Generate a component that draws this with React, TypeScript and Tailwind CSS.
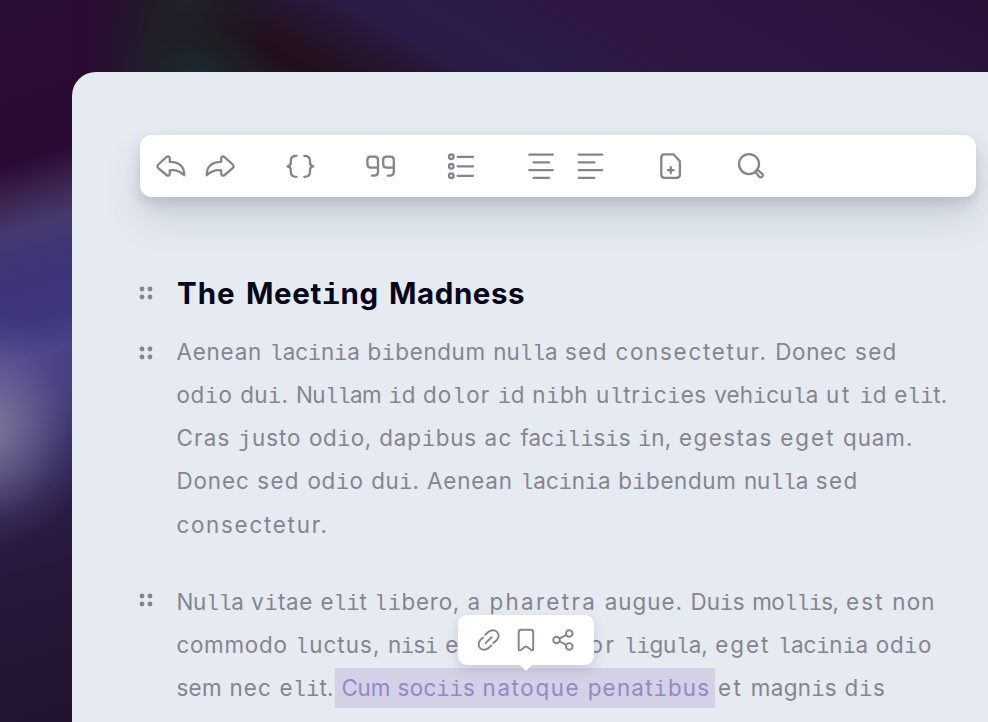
import type { ReactNode } from "react";

type W = [text: string, width: number];

const canvas = document.createElement("canvas").getContext("2d")!;

// Slab-shaped letters come from the mono face, the rest from Inter.
const isSlab = (c: string) => "ilj".includes(c);
const runsOf = (text: string) => text.match(/[ilj]|[^ilj]+/g) ?? [];

function measure(text: string, size: number, slabSize: number, weight: number) {
  let total = 0;
  for (const run of runsOf(text)) {
    canvas.font = isSlab(run)
      ? `${weight} ${slabSize}px "Liberation Mono"`
      : `${weight} ${size}px Inter`;
    total += canvas.measureText(run).width;
  }
  return total;
}

function Word({ word, bold = false }: { word: W; bold?: boolean }) {
  const [text, width] = word;
  const natural = bold ? measure(text, 29.5, 30, 700) : measure(text, 22.4, 21.5, 400);
  const spacing = (width + 2.2 - natural) / text.length;
  return (
    <span
      className="block shrink-0 whitespace-pre"
      style={{ letterSpacing: `${spacing}px`, width: `${width + 2}px` }}
    >
      {runsOf(text).map((run, i) =>
        isSlab(run) ? (
          <span
            key={i}
            className={
              bold
                ? "font-['Liberation_Mono',monospace] text-[30px] leading-none"
                : "font-['Liberation_Mono',monospace] text-[21.5px] leading-none"
            }
          >
            {run}
          </span>
        ) : (
          run
        )
      )}
    </span>
  );
}

const words = (list: W[]) => list.map((w, i) => <Word key={i} word={w} />);

function Line({ children }: { children: ReactNode }) {
  return <div className="flex h-[43.25px] gap-[7.8px] leading-[43.25px]">{children}</div>;
}

function Handle({ className }: { className: string }) {
  return (
    <svg viewBox="0 0 14 14" className={`h-3.5 w-3.5 shrink-0 fill-[#858491] ${className}`}>
      <circle cx="3" cy="3" r="2.4" />
      <circle cx="11" cy="3" r="2.4" />
      <circle cx="3" cy="11" r="2.4" />
      <circle cx="11" cy="11" r="2.4" />
    </svg>
  );
}

function Icon({ box, children }: { box: string; children: ReactNode }) {
  return (
    <svg
      viewBox={box}
      className="h-8 w-8 shrink-0 fill-none stroke-[#858390] stroke-[2.3]"
      strokeLinecap="round"
      strokeLinejoin="round"
    >
      {children}
    </svg>
  );
}

const p1: W[][] = [
  [["Aenean", 83.5], ["lacinia", 88], ["bibendum", 116], ["nulla", 62], ["sed", 40.5], ["consectetur.", 150], ["Donec", 70], ["sed", 40.5]],
  [["odio", 54], ["dui.", 46], ["Nullam", 83], ["id", 24.5], ["dolor", 65], ["id", 24.5], ["nibh", 54], ["ultricies", 108.5], ["vehicula", 102], ["ut", 24], ["id", 24.5], ["elit.", 51]],
  [["Cras", 52], ["justo", 61], ["odio,", 60.5], ["dapibus", 95.5], ["ac", 26], ["facilisis", 108], ["in,", 31], ["egestas", 91.5], ["eget", 53], ["quam.", 68]],
  [["Donec", 71], ["sed", 40.5], ["odio", 54], ["dui.", 46], ["Aenean", 83.5], ["lacinia", 88], ["bibendum", 116], ["nulla", 62], ["sed", 40.5]],
  [["consectetur.", 150]],
];

const p2: W[][] = [
  [["Nulla", 65], ["vitae", 59.5], ["elit", 44], ["libero,", 83.5], ["a", 12], ["pharetra", 105.5], ["augue.", 76], ["Duis", 52], ["mollis,", 84], ["est", 36.5], ["non", 41]],
  [["commodo", 109], ["luctus,", 83], ["nisi", 47.5], ["erat", 47], ["porttitor", 112], ["ligula,", 81.5], ["eget", 53], ["lacinia", 88], ["odio", 54]],
];

export default function App() {
  return (
    <div className="h-[722px] w-full overflow-hidden pl-[72px] pt-[72px] font-['Inter',sans-serif] [background:radial-gradient(ellipse_115px_120px_at_-18px_430px,rgba(145,139,165,0.85),rgba(130,123,165,0.55)_40%,rgba(110,104,160,0.18)_75%,rgba(100,95,150,0))_0_0/72px_722px_no-repeat,linear-gradient(163deg,#2a0d35_0px,#2a0a33_160px,#3c2652_196px,#45396f_225px,#3d3478_270px,#3e367c_315px,#4a4288_350px,#423a78_395px,#30285c_445px,#2a1c45_500px,#271739_570px,#221430_711px)_0_0/72px_722px_no-repeat,linear-gradient(90deg,#2a0c33_0px,#2a0c33_90px,rgba(42,12,51,0)_160px),radial-gradient(ellipse_80px_55px_at_195px_72px,#1c2830_0%,rgba(28,36,40,0.4)_50%,rgba(28,36,40,0)_100%),radial-gradient(ellipse_90px_80px_at_185px_0px,#20222a_0%,rgba(31,32,38,0.5)_55%,rgba(31,32,38,0)_100%),linear-gradient(29deg,#1f2028_90px,#201a24_120px,#210f1c_150px,#241326_178px,#2c1b48_235px,#2b1c48_265px,#2e1643_340px,#2d1543_430px,#281136_542px)_0_0/988px_72px_no-repeat,#2d1543]">
      <main className="relative h-[650px] rounded-tl-3xl bg-[#e6ebf2] pl-[68px] pt-[63px]">
        <nav className="flex h-[62px] w-[836px] items-center gap-12 rounded-xl bg-white pl-[15px] shadow-[0_24px_36px_rgba(90,95,115,0.16),0_6px_14px_rgba(80,85,100,0.22)]">
          <div className="flex gap-[17px]">
            <Icon box="155 150 32 32">
              <path d="M169.8 161.8V158.5C169.8 156.3 167.9 155.8 166.4 157.2L158.3 164.5C157.1 165.6 157.1 167.1 158.3 168.2L166.4 175C167.9 176.3 169.8 175.7 169.8 173.5V170.3C175.6 169.6 180 171 184.2 175.3C184.6 167.3 179.8 161.8 169.8 161.8Z" />
            </Icon>
            <Icon box="204 150 32 32">
              <path d="M221.2 161.8V158.5C221.2 156.3 223.1 155.8 224.6 157.2L232.7 164.5C233.9 165.6 233.9 167.1 232.7 168.2L224.6 175C223.1 176.3 221.2 175.7 221.2 173.5V170.3C215.4 169.6 211 171 206.8 175.3C206.4 167.3 211.2 161.8 221.2 161.8Z" />
            </Icon>
          </div>
          <Icon box="284 150 32 32">
            <path d="M296.5 155.8C292.3 155.8 290.8 157.3 290.8 160.5V162.5C290.8 164.7 289.8 166 287.5 166.4C289.8 166.8 290.8 168 290.8 170.2V172C290.8 175.2 292.3 176.8 296.5 176.8M304.3 155.8C308.5 155.8 310 157.3 310 160.5V162.5C310 164.7 311 166 313.3 166.4C311 166.8 310 168 310 170.2V172C310 175.2 308.5 176.8 304.3 176.8" />
          </Icon>
          <Icon box="364 150 32 32">
            <path d="M378 167.7H371C368.6 167.7 367.4 166.5 367.4 164.2V160C367.4 157.8 368.6 156.7 370.8 156.7H374.6C376.9 156.7 378 157.8 378 160V171.5C378 174.2 376.5 175.7 374 175.7H372M393.8 167.7H386.8C384.4 167.7 383.2 166.5 383.2 164.2V160C383.2 157.8 384.4 156.7 386.6 156.7H390.4C392.7 156.7 393.8 157.8 393.8 160V171.5C393.8 174.2 392.3 175.7 389.8 175.7H387.8" />
          </Icon>
          <Icon box="444 150 32 32">
            <circle cx="451.3" cy="156.8" r="2.3" />
            <circle cx="451.3" cy="166.3" r="2.3" />
            <circle cx="451.3" cy="175.8" r="2.3" />
            <path d="M457.7 156.8H473M457.7 166.3H473M457.7 175.8H473" />
          </Icon>
          <div className="flex gap-[17px]">
            <Icon box="524 150 32 32">
              <path d="M529.3 154.6H552.8M533.5 162.4H549M529.3 170.1H552.8M533.5 177.8H549" />
            </Icon>
            <Icon box="573 150 32 32">
              <path d="M578.7 154.6H602.2M578.7 162.4H594.4M578.7 170.1H602.2M578.7 177.8H594.4" />
            </Icon>
          </div>
          <Icon box="653 150 32 32">
            <path d="M673.7 154.4H664.5C662.3 154.4 661.3 155.5 661.3 157.6V174.6C661.3 176.8 662.4 177.9 664.5 177.9H676.6C678.8 177.9 679.9 176.8 679.9 174.6V161.2ZM670.8 167.2V173M667.9 170.1H673.7" />
          </Icon>
          <Icon box="733 150 32 32">
            <circle cx="749" cy="164.1" r="10" />
            <path d="M755.2 171.5L758.8 176.4C760.6 178.8 764.2 176 762.3 173.8L758.6 170.8" />
          </Icon>
        </nav>

        <div className="mt-[65.5px] flex h-[60px]">
          <Handle className="mt-[23.5px] -ml-px" />
          <h1 className="ml-[24px] flex gap-[10.5px] text-[29.5px] font-bold leading-[60px] text-[#05061a]">
            <Word bold word={["The", 56.5]} />
            <Word bold word={["Meeting", 130.5]} />
            <Word bold word={["Madness", 134]} />
          </h1>
        </div>

        <section className="mt-[7px] flex text-[22.4px] text-[#858491]">
          <Handle className="mt-[16.5px] -ml-px" />
          <div className="ml-[23.4px]">
            {p1.map((line, i) => (
              <Line key={i}>{words(line)}</Line>
            ))}
          </div>
        </section>

        <section className="mt-[33.75px] flex text-[22.4px] text-[#858491]">
          <Handle className="mt-[13.5px] -ml-px" />
          <div className="ml-[23.4px]">
            {p2.map((line, i) => (
              <Line key={i}>{words(line)}</Line>
            ))}
            <Line>
              {words([["sem", 43.3], ["nec", 40.3], ["elit.", 52]])}
              <mark className="-ml-[6px] -mr-[5px] mt-[2px] flex h-[40px] shrink-0 gap-[7.6px] bg-[#d4d1e6] pl-[6px] pr-[5px] leading-[39.25px] text-[#9488c6]">
                {words([["Cum", 46.5], ["sociis", 75.5], ["natoque", 95.5], ["penatibus", 120.5]])}
              </mark>
              {words([["et", 23], ["magnis", 84], ["dis", 39]])}
            </Line>
          </div>
        </section>

        <div className="absolute left-[386px] top-[543px] flex h-[50px] w-[136px] rounded-[9px] bg-white shadow-[0_5px_12px_rgba(80,80,110,0.2)]">
          <svg
            viewBox="458 615 136 58"
            className="h-[58px] w-[136px] shrink-0 fill-none stroke-[#858390] stroke-[1.9]"
            strokeLinecap="round"
            strokeLinejoin="round"
          >
            <path d="M519 664H533L527.2 670Q526 671.2 524.8 670Z" className="fill-white stroke-none" />
            <path d="M485.6 643.1L491.6 637.2M485.2 634.8L488.3 632C491.2 629.5 494.9 629.8 497 631.9C499.1 634 499.2 637.6 496.8 640L493.4 643M483 637.6L480.4 640C478 642.4 478.1 646 480.2 648.1C482.3 650.2 486 650.3 488.6 648L491.4 645.4" />
            <path d="M518.7 632.2Q518.7 629.7 521.2 629.7H530.7Q533.2 629.7 533.2 632.2V649Q533.2 651.2 531.2 650L526.8 646.8Q526 646.2 525.2 646.8L520.8 650Q518.7 651.2 518.7 649Z" />
            <circle cx="556.5" cy="640" r="3.3" />
            <circle cx="569.3" cy="633.5" r="3.3" />
            <circle cx="569.3" cy="646.4" r="3.3" />
            <path d="M559.6 638.4L566.2 635.1M559.6 641.5L566.2 644.8" />
          </svg>
        </div>
      </main>
    </div>
  );
}
